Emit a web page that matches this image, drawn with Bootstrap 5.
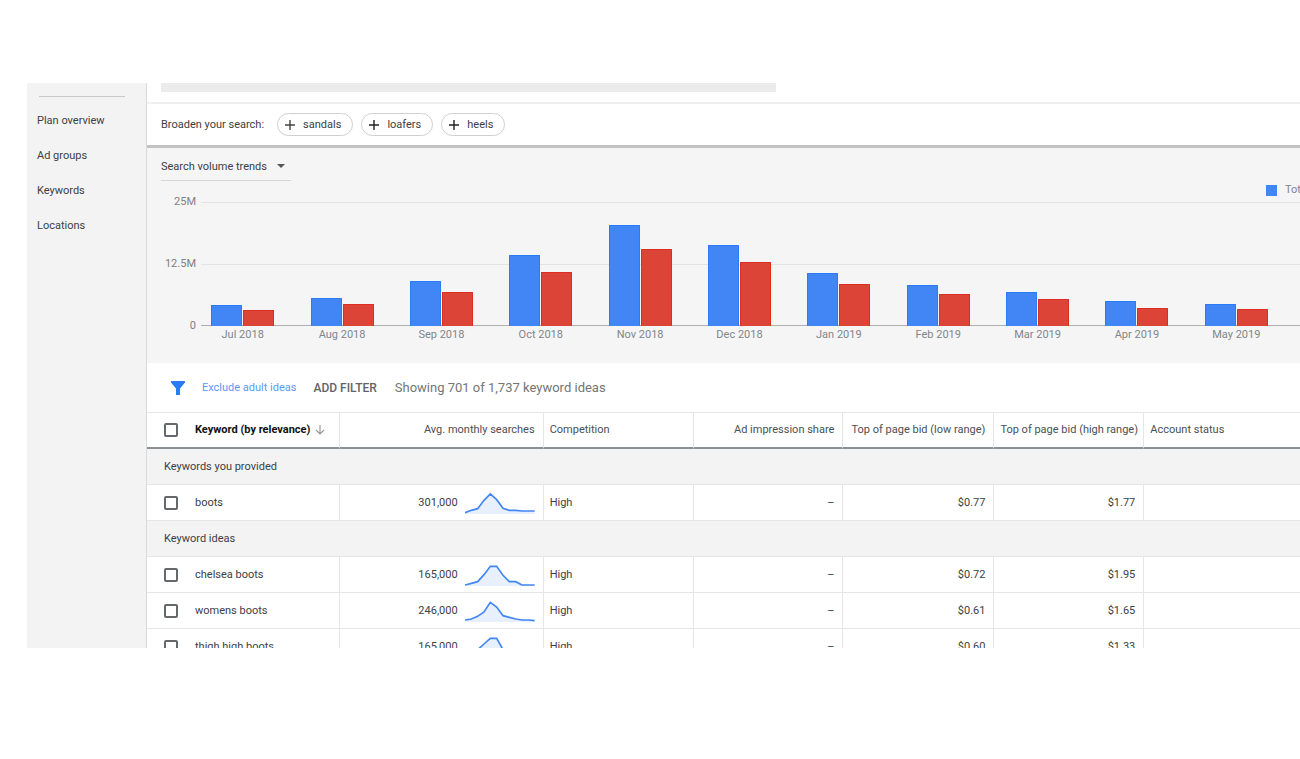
<!DOCTYPE html>
<html lang="en">
<head>
<meta charset="utf-8">
<meta name="viewport" content="width=device-width, initial-scale=1">
<title>Keyword ideas</title>
<link href="https://cdn.jsdelivr.net/npm/bootstrap@5.3.0/dist/css/bootstrap.min.css" rel="stylesheet">
<style>
  body { font-family: Roboto, "Liberation Sans", sans-serif; font-size: 11px; line-height: 16px; color: #3c4043; background: #fff; }
  button, select, input { font-family: inherit; }
  .screen { padding: 83px 0 111px 27px; }
  .side { width: 120px; background: #f3f3f3; border-right: 1px solid #dadada; padding: 13px 21px 0 10px; }
  .side hr { margin: 0 0 16px 2px; border-color: #c8c8c8; opacity: 1; }
  .side a { color: #3c4043; font-size: 11px; margin-bottom: 19px; text-decoration: none; white-space: nowrap; }
  .main-pane { min-width: 0; }
  .search-strip { height: 21px; padding-left: 14px; border-bottom: 2px solid #f0f0f0; }
  .search-fill { width: 54%; height: 9px; background: #ebebeb; }
  .broaden { height: 44px; padding-left: 14px; border-bottom: 3px solid #c2c2c2; }
  .broaden-label { margin-right: 13px; }
  .chip { height: 23px; padding: 0 11px 0 7px; border: 1px solid #d0d0d0; border-radius: 12px; background: #fff; color: #3c4043; font-size: 11px; line-height: 16px; gap: 8px; }
  .trends { background: #f5f5f5; padding-top: 4px; height: 215px; }
  .trend-select { width: 130px; height: 29px; margin-left: 14px; padding: 2px 0 0; border: 0; border-bottom: 1px solid #d6d6d6; border-radius: 0; color: #3c4043; font-size: 11px; line-height: 16px; appearance: none;
    background: transparent url("data:image/svg+xml,%3Csvg xmlns='http://www.w3.org/2000/svg' viewBox='0 0 8 4'%3E%3Cpath fill='%23555' d='M0 0h8L4 4z'/%3E%3C/svg%3E") no-repeat right 6px center / 8px 4px; }
  .legend { width: 34px; margin-left: auto; margin-top: 3px; gap: 8px; height: 12px; line-height: 12px; color: #80868b; overflow: hidden; }
  .swatch { flex: 0 0 11px; height: 11px; background: #4285f4; }
  .axis-y { width: 54px; padding-right: 5px; height: 136px; line-height: 12px; color: #808080; text-align: right; }
  .plot { min-width: 0; padding-top: 6px; }
  .plot-lines { height: 124px; border-top: 1px solid #e3e3e3; border-bottom: 1px solid #b0b0b0; background: linear-gradient(#e3e3e3, #e3e3e3) 0 61px / 100% 1px no-repeat; }
  .months { display: grid; grid-template-columns: repeat(11, 1fr); margin: 0 14px 0 -8px; }
  .bars { height: 123px; }
  .bars > div { display: flex; align-items: flex-end; justify-content: center; gap: 1px; }
  .bars i { width: 31px; background: #4285f4; border: 1px solid #2a7bf6; border-bottom-width: 0; border-radius: 1px 1px 0 0; }
  .bars i + i { background: #db4437; border-color: #dc2d20; }
  .month-names { color: #80868b; text-align: center; margin-top: 1px; }
  .filters { height: 50px; padding-left: 23px; border-bottom: 1px solid #e4e6e8; font-size: 13px; }
  .exclude { color: #5e97f6; font-size: 11px; text-decoration: none; margin-left: 16px; }
  .add-filter { border: 0; background: none; padding: 0; color: #5f6368; font-size: 12px; font-weight: 500; margin-left: 17px; }
  .showing { color: #757575; margin-left: 18px; }
  .ideas { table-layout: fixed; width: 100%; margin: 0; border-collapse: separate; border-spacing: 0; color: #3c4043; }
  .ideas th, .ideas td { height: 36px; padding: 0 8px 0 6px; font-weight: 400; border-bottom: 1px solid #e4e6e8; border-right: 1px solid #e4e6e8; white-space: nowrap; vertical-align: middle; }
  .ideas th:last-child, .ideas td:last-child { border-right: 0; }
  .ideas thead th { border-bottom: 2px solid #8b9094; color: #4a4f54; }
  .ideas thead th:first-child { color: #111; font-weight: 700; }
  .ideas .group th { padding-left: 17px; background: #f3f3f3; }
  .pick { padding-left: 11px; gap: 17px; }
  .pick input { appearance: none; width: 14px; height: 14px; margin: 0; border: 2px solid #66696c; border-radius: 2px; background: #fff; flex: none; }
  .pick input:checked { background: #4285f4; }
  .sort-label { gap: 5px; }
  .volume { gap: 7px; }
  .spark { width: 70px; height: 22px; }
  .spark polygon { fill: #e8f0fe; }
  .spark polyline { fill: none; stroke: #4285f4; stroke-width: 5; }
</style>
</head>
<body>
<div class="screen vh-100 overflow-hidden">
  <div class="d-flex h-100 overflow-hidden">
    <nav class="side flex-shrink-0 d-flex flex-column">
      <hr>
      <a href="#">Plan overview</a>
      <a href="#">Ad groups</a>
      <a href="#">Keywords</a>
      <a href="#">Locations</a>
    </nav>
    <main class="main-pane flex-grow-1">
      <div class="search-strip"><div class="search-fill"></div></div>
      <div class="broaden d-flex align-items-center">
        <span class="broaden-label">Broaden your search:</span>
        <div class="d-flex gap-2">
          <button type="button" class="chip d-flex align-items-center"><svg width="10" height="10" viewBox="0 0 10 10" aria-hidden="true"><path d="M5 0v10M0 5h10" stroke="#444" stroke-width="1.4"/></svg>sandals</button>
          <button type="button" class="chip d-flex align-items-center"><svg width="10" height="10" viewBox="0 0 10 10" aria-hidden="true"><path d="M5 0v10M0 5h10" stroke="#222" stroke-width="1.4"/></svg>loafers</button>
          <button type="button" class="chip d-flex align-items-center"><svg width="10" height="10" viewBox="0 0 10 10" aria-hidden="true"><path d="M5 0v10M0 5h10" stroke="#222" stroke-width="1.4"/></svg>heels</button>
        </div>
      </div>

      <section class="trends">
        <select class="trend-select d-block" aria-label="Chart"><option>Search volume trends</option></select>
        <div class="legend d-flex align-items-center"><span class="swatch"></span><span>Total</span></div>
        <div class="d-flex">
          <div class="axis-y flex-shrink-0 d-flex flex-column justify-content-between"><span>25M</span><span>12.5M</span><span>0</span></div>
          <div class="plot flex-grow-1">
            <div class="plot-lines">
              <div class="months bars">
                <div><i style="height:17%"></i><i style="height:13%"></i></div>
                <div><i style="height:23%"></i><i style="height:18%"></i></div>
                <div><i style="height:37%"></i><i style="height:28%"></i></div>
                <div><i style="height:58%"></i><i style="height:44%"></i></div>
                <div><i style="height:82%"></i><i style="height:63%"></i></div>
                <div><i style="height:66%"></i><i style="height:52%"></i></div>
                <div><i style="height:43%"></i><i style="height:34%"></i></div>
                <div><i style="height:33%"></i><i style="height:26%"></i></div>
                <div><i style="height:28%"></i><i style="height:22%"></i></div>
                <div><i style="height:20%"></i><i style="height:15%"></i></div>
                <div><i style="height:18%"></i><i style="height:14%"></i></div>
              </div>
            </div>
            <div class="months month-names">
              <span>Jul 2018</span><span>Aug 2018</span><span>Sep 2018</span><span>Oct 2018</span><span>Nov 2018</span><span>Dec 2018</span><span>Jan 2019</span><span>Feb 2019</span><span>Mar 2019</span><span>Apr 2019</span><span>May 2019</span>
            </div>
          </div>
        </div>
      </section>

      <div class="filters d-flex align-items-center">
        <svg width="16" height="16" viewBox="0 0 16 16" aria-hidden="true"><path fill="#2a7bf6" d="M1 1h14v1.500L10 8.500V15H6V8.500L1 2.500z"/></svg>
        <a href="#" class="exclude">Exclude adult ideas</a>
        <button type="button" class="add-filter">ADD FILTER</button>
        <span class="showing">Showing 701 of 1,737 keyword ideas</span>
      </div>

      <table class="ideas">
        <colgroup><col style="width:16.7%"><col style="width:17.7%"><col style="width:13%"><col style="width:13%"><col style="width:13.1%"><col style="width:13%"><col></colgroup>
        <thead>
          <tr>
            <th scope="col"><div class="pick d-flex align-items-center"><input type="checkbox" aria-label="Select all"><span class="sort-label d-flex align-items-center">Keyword (by relevance)<svg width="10" height="10" viewBox="0 0 10 10" aria-hidden="true"><path d="M5 0v9M1 5l4 4 4-4" fill="none" stroke="#999" stroke-width="1.2"/></svg></span></div></th>
            <th scope="col" class="text-end">Avg. monthly searches</th>
            <th scope="col">Competition</th>
            <th scope="col" class="text-end">Ad impression share</th>
            <th scope="col" class="text-end">Top of page bid (low range)</th>
            <th scope="col" class="text-end">Top of page bid (high range)</th>
            <th scope="col">Account status</th>
          </tr>
        </thead>
        <tbody>
          <tr class="group"><th colspan="7" scope="rowgroup">Keywords you provided</th></tr>
          <tr>
            <td><label class="pick d-flex align-items-center"><input type="checkbox">boots</label></td>
            <td><div class="volume d-flex align-items-center justify-content-end">301,000<svg class="spark" viewBox="0 0 210 66" aria-hidden="true"><polygon points="0,66 0,62 19,55 38,50 57,25 76,6 95,23 114,49 133,55 152,55 171,57 209,57 209,66"/><polyline points="0,62 19,55 38,50 57,25 76,6 95,23 114,49 133,55 152,55 171,57 209,57"/></svg></div></td>
            <td>High</td><td class="text-end">–</td><td class="text-end">$0.77</td><td class="text-end">$1.77</td><td></td>
          </tr>
          <tr class="group"><th colspan="7" scope="rowgroup">Keyword ideas</th></tr>
          <tr>
            <td><label class="pick d-flex align-items-center"><input type="checkbox">chelsea boots</label></td>
            <td><div class="volume d-flex align-items-center justify-content-end">165,000<svg class="spark" viewBox="0 0 210 66" aria-hidden="true"><polygon points="0,66 0,63 19,58 38,53 57,32 76,7 95,7 114,34 133,53 152,53 171,63 209,63 209,66"/><polyline points="0,63 19,58 38,53 57,32 76,7 95,7 114,34 133,53 152,53 171,63 209,63"/></svg></div></td>
            <td>High</td><td class="text-end">–</td><td class="text-end">$0.72</td><td class="text-end">$1.95</td><td></td>
          </tr>
          <tr>
            <td><label class="pick d-flex align-items-center"><input type="checkbox">womens boots</label></td>
            <td><div class="volume d-flex align-items-center justify-content-end">246,000<svg class="spark" viewBox="0 0 210 66" aria-hidden="true"><polygon points="0,66 0,60 19,57 38,49 57,36 76,7 95,21 114,47 133,52 152,57 171,60 190,60 209,62 209,66"/><polyline points="0,60 19,57 38,49 57,36 76,7 95,21 114,47 133,52 152,57 171,60 190,60 209,62"/></svg></div></td>
            <td>High</td><td class="text-end">–</td><td class="text-end">$0.61</td><td class="text-end">$1.65</td><td></td>
          </tr>
          <tr>
            <td><label class="pick d-flex align-items-center"><input type="checkbox">thigh high boots</label></td>
            <td><div class="volume d-flex align-items-center justify-content-end">165,000<svg class="spark" viewBox="0 0 210 66" aria-hidden="true"><polygon points="0,66 0,62 19,55 38,41 57,24 76,7 95,7 114,41 133,53 152,56 171,60 209,62 209,66"/><polyline points="0,62 19,55 38,41 57,24 76,7 95,7 114,41 133,53 152,56 171,60 209,62"/></svg></div></td>
            <td>High</td><td class="text-end">–</td><td class="text-end">$0.60</td><td class="text-end">$1.33</td><td></td>
          </tr>
        </tbody>
      </table>
    </main>
  </div>
</div>
<script src="https://cdn.jsdelivr.net/npm/bootstrap@5.3.0/dist/js/bootstrap.bundle.min.js"></script>
</body>
</html>
